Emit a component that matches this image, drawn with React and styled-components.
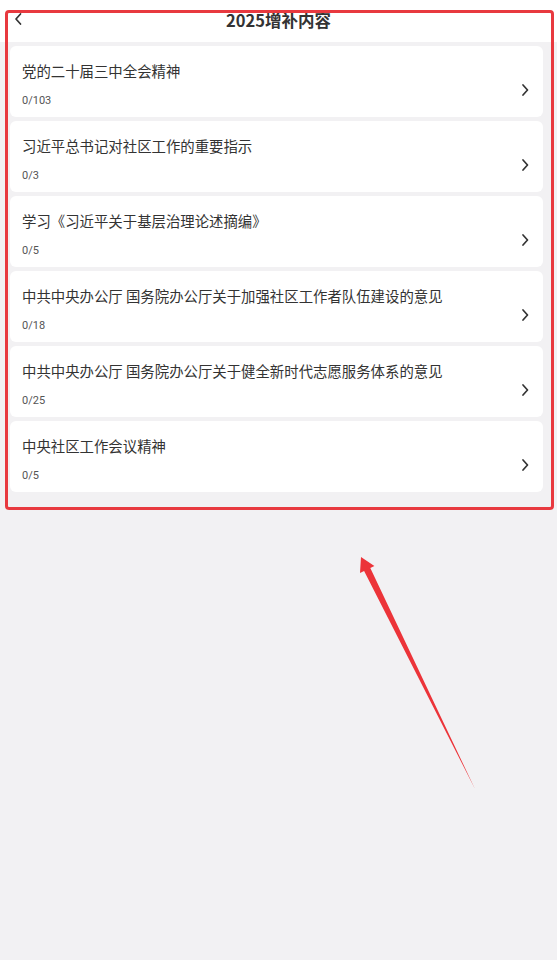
import React from "react";
import styled, { createGlobalStyle } from "styled-components";

const items = [
  { title: "党的二十届三中全会精神", count: "0/103" },
  { title: "习近平总书记对社区工作的重要指示", count: "0/3" },
  { title: "学习《习近平关于基层治理论述摘编》", count: "0/5" },
  { title: "中共中央办公厅 国务院办公厅关于加强社区工作者队伍建设的意见", count: "0/18" },
  { title: "中共中央办公厅 国务院办公厅关于健全新时代志愿服务体系的意见", count: "0/25" },
  { title: "中央社区工作会议精神", count: "0/5" },
];

function Chevron({ left }) {
  return (
    <svg width="10" height="14" viewBox="0 0 10 14">
      <path
        d={left ? "M7.5 2 L3 7 L7.5 12" : "M3 2 L7.5 7 L3 12"}
        fill="none"
        stroke="#333"
        strokeWidth="1.7"
        strokeLinecap="round"
        strokeLinejoin="round"
      />
    </svg>
  );
}

function App() {
  return (
    <Page>
      <GlobalStyle />
      <Header>
        <Back>
          <Chevron left />
        </Back>
        <Title>2025增补内容</Title>
      </Header>
      <List>
        {items.map((it) => (
          <Card key={it.title}>
            <Info>
              <ItemTitle>{it.title}</ItemTitle>
              <Count>{it.count}</Count>
            </Info>
            <Arrow>
              <Chevron />
            </Arrow>
          </Card>
        ))}
      </List>
      <Frame />
      <Pointer width="557" height="960" viewBox="0 0 557 960">
        <polygon
          points="361,557 374.4,566 370.3,568 475,789 364.1,571 360,573"
          fill="#ec3439"
        />
      </Pointer>
    </Page>
  );
}

export default App;

const GlobalStyle = createGlobalStyle`
  body {
    margin: 0;
    background: #f2f1f3;
    font-family: "Noto Sans CJK SC", "Noto Sans", sans-serif;
  }
`;

const Page = styled.div`
  position: relative;
  width: 557px;
  height: 960px;
  background: #f2f1f3;
  overflow: hidden;
`;

const Header = styled.div`
  height: 42px;
  background: #fff;
  display: flex;
  align-items: center;
  justify-content: center;
  position: relative;
`;

const Back = styled.div`
  position: absolute;
  left: 13px;
  top: 12px;
  display: flex;
`;

const Title = styled.div`
  font-size: 16.5px;
  font-weight: 700;
  color: #333;
  margin-top: -3px;
`;

const List = styled.div`
  display: flex;
  flex-direction: column;
  gap: 4px;
  padding: 4px 14px 0 10px;
`;

const Card = styled.div`
  height: 71px;
  background: #fff;
  border-radius: 6px;
  display: flex;
  padding: 0 12px 0 12px;
  box-sizing: border-box;
`;

const Info = styled.div`
  flex: 1;
  display: flex;
  flex-direction: column;
  padding-top: 14px;
`;

const ItemTitle = styled.div`
  font-size: 14.4px;
  line-height: 22px;
  color: #333;
`;

const Count = styled.div`
  font-family: Roboto, "Noto Sans", sans-serif;
  font-size: 11px;
  line-height: 16px;
  color: #555;
  margin-top: 11px;
`;

const Arrow = styled.div`
  display: flex;
  padding-top: 37px;
  margin-right: 1px;
`;

const Frame = styled.div`
  position: absolute;
  left: 5px;
  top: 10px;
  width: 549px;
  height: 500px;
  box-sizing: border-box;
  border: 3px solid #e8393f;
  border-radius: 4px;
  pointer-events: none;
`;

const Pointer = styled.svg`
  position: absolute;
  left: 0;
  top: 0;
  pointer-events: none;
`;
